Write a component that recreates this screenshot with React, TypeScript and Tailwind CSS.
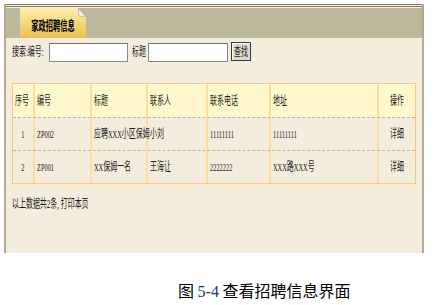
import React from 'react';

const Sq = ({ children, center }: { children: React.ReactNode; center?: boolean }) => (
  <span
    className={
      center
        ? 'inline-block whitespace-nowrap origin-center scale-x-[0.58]'
        : 'inline-block whitespace-nowrap origin-left scale-x-[0.58]'
    }
  >
    {children}
  </span>
);

const cols = 'grid grid-cols-[22px_57px_56px_60px_63px_108px_36px]';

const rows = [
  ['1', 'ZP002', '应聘XXX小区保姆', '小刘', '11111111', '11111111'],
  ['2', 'ZP001', 'XX保姆一名', '王海让', '2222222', 'XXX路XXX号'],
];

// Latin runs in the reference are set a bit smaller than the CJK glyphs
const small = (s: string) =>
  s.split(/([A-Z0-9]+)/).map((part, i) =>
    /^[A-Z0-9]+$/.test(part) ? (
      <span key={i} className="text-[11px]">
        {part}
      </span>
    ) : (
      part
    )
  );

const Cell = ({ children, center, last }: { children: React.ReactNode; center?: boolean; last?: boolean }) => (
  <div
    className={
      (last ? '' : 'border-r-2 border-[#fcdca2] ') +
      (center ? 'flex items-center justify-center overflow-visible' : 'flex items-center pl-[2px] overflow-visible')
    }
  >
    <Sq center={center}>{children}</Sq>
  </div>
);

const App = () => {
  return (
    <div className="w-[444px] h-[305px] bg-white text-[12px] leading-none text-[#1c1c1c] font-['Liberation_Serif','Noto_Sans_CJK_SC',serif] overflow-hidden">
      {/* panel */}
      <div className="ml-[4px] pt-[4px] w-[420px]">
        <div className="h-[249px] bg-[#f4eddd] border-l-2 border-r-2 border-[#b6a78d] flex flex-col">
          {/* top double rule */}
          <div className="h-[4px] border-t-[3px] border-double border-[#8e7a5a]" />

          {/* header band with tab */}
          <div className="h-[30px] bg-[#bcb89b] pl-[14px] flex items-end">
            <div className="relative w-[66px] h-[30px] bg-gradient-to-b from-[#fcefb4] via-[#f6d878] to-[#e9bf52] flex items-center justify-center pt-[3px]">
              <span className="inline-block whitespace-nowrap origin-center scale-x-[0.56] text-[13px] font-bold text-black font-['Noto_Sans_CJK_SC',sans-serif]">
                家政招聘信息
              </span>
              <svg className="absolute right-0 top-0" width="8" height="9" viewBox="0 0 8 9">
                <polygon points="0,0 8,9 8,0" fill="#bcb89b" />
                <polygon points="0,0 8,9 1,8" fill="#f4f2ea" stroke="#a9a39a" strokeWidth="0.6" />
              </svg>
            </div>
          </div>

          {/* search row */}
          <div className="flex items-center h-[20px] mt-[4px] pl-[6px]">
            <div className="w-[37px]">
              <Sq>搜索:编号:</Sq>
            </div>
            <div className="w-[79px] h-[19px] bg-white border border-[#8a8a8a] border-t-[#6d6d6d]" />
            <div className="w-[16px] ml-[4px]">
              <Sq>标题</Sq>
            </div>
            <div className="w-[80px] h-[19px] bg-white border border-[#8a8a8a] border-t-[#6d6d6d]" />
            <div className="ml-[3px] w-[20px] h-[19px] -mt-[1px] bg-[#dcd8d0] border border-[#3a3a3a] shadow-[inset_1px_1px_0_#ffffff] flex items-center justify-center">
              <Sq center>查找</Sq>
            </div>
          </div>

          {/* table */}
          <div className="mt-[21px] ml-[6px] w-[404px] border border-[#fbc97c]">
            <div className={`${cols} h-[33px] bg-[#fff8cd]`}>
              <Cell>序号</Cell>
              <Cell>编号</Cell>
              <Cell>标题</Cell>
              <Cell>联系人</Cell>
              <Cell>联系电话</Cell>
              <Cell>地址</Cell>
              <Cell center last>操作</Cell>
            </div>
            {rows.map((r) => (
              <div key={r[0]} className={`${cols} h-[33px] border-t border-dashed border-[#bcb4a4]`}>
                <Cell center>{small(r[0])}</Cell>
                <Cell>{small(r[1])}</Cell>
                <Cell>{small(r[2])}</Cell>
                <Cell>{r[3]}</Cell>
                <Cell>{small(r[4])}</Cell>
                <Cell>{small(r[5])}</Cell>
                <Cell center last>详细</Cell>
              </div>
            ))}
          </div>

          {/* footer */}
          <div className="mt-[14px] pl-[6px]">
            <Sq>以上数据共2条, 打印本页</Sq>
          </div>
        </div>
      </div>

      {/* caption */}
      <div className="mt-[28px] pl-[178px] text-[16px] leading-[18px] text-black font-['Noto_Sans_CJK_SC',sans-serif] whitespace-nowrap">
        图 <span className="font-['Liberation_Serif',serif] text-[#1f3763]">5-4</span> 查看招聘信息界面
      </div>
    </div>
  );
};

export default App;
